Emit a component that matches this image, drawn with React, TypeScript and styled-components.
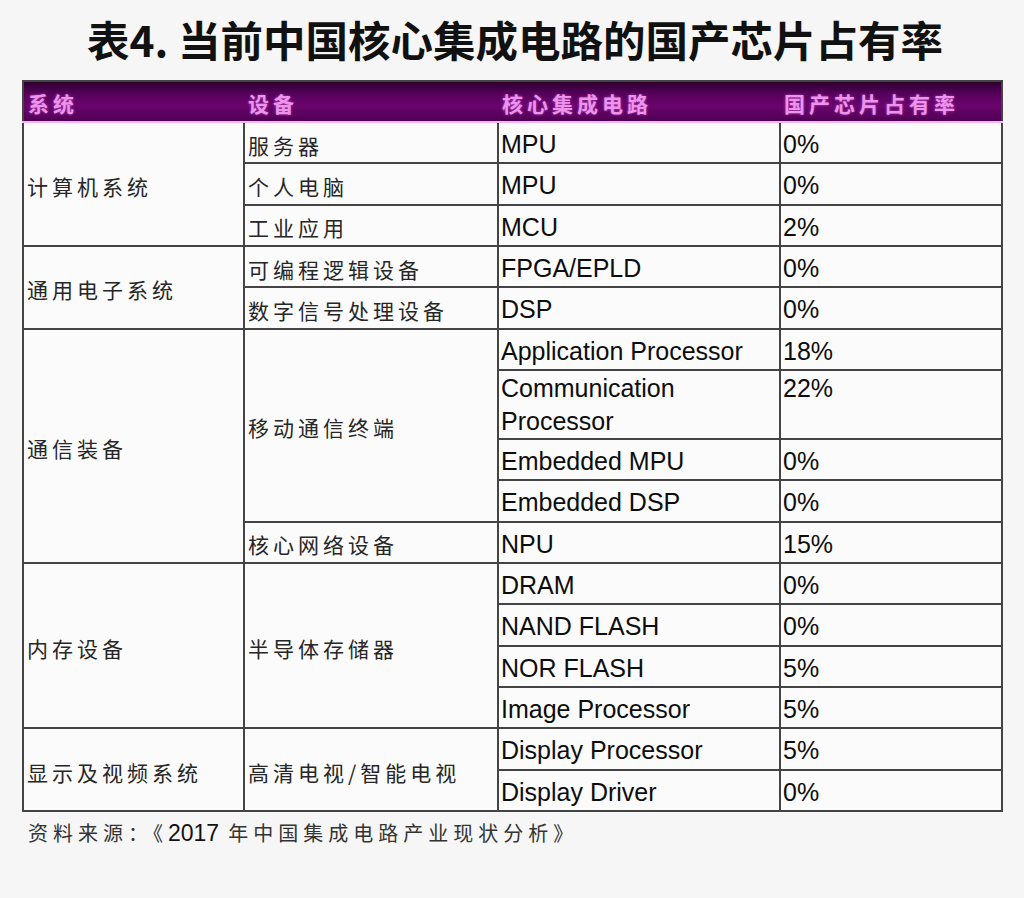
import styled, { createGlobalStyle } from "styled-components";

const GlobalStyle = createGlobalStyle`
  body {
    margin: 0;
    background: #f6f6f6;
  }
`;

const Page = styled.div`
  width: 1024px;
  height: 898px;
  box-sizing: border-box;
  padding-top: 12px;
  background: #f6f6f6;
  font-family: "Liberation Sans", Arial, sans-serif;
  overflow: hidden;
`;

const Title = styled.h1`
  margin: 0;
  padding-left: 6px;
  text-align: center;
  font-family: "Noto Sans CJK SC", "Liberation Sans", sans-serif;
  font-size: 42.5px;
  line-height: 54px;
  font-weight: 700;
  color: #111;
`;

const Table = styled.table`
  margin: 14px 0 0 22px;
  width: 979px;
  border-collapse: collapse;
  table-layout: fixed;
  border: 2px solid #444;
  background: #fbfbfb;
`;

const HeadRow = styled.tr`
  background: linear-gradient(
    180deg,
    #2a002c 0%,
    #55005a 30%,
    #6a046e 60%,
    #4e0052 100%
  );
`;

const HeadCell = styled.th`
  height: 37px;
  padding: 2px 4px 0;
  text-align: left;
  vertical-align: middle;
  font-family: "Noto Sans CJK SC", sans-serif;
  font-size: 21px;
  font-weight: 700;
  letter-spacing: 4px;
  color: #ee92ee;
  text-shadow: 0 0 3px rgba(255, 160, 255, 0.45);
  border-bottom: 2px solid #f2b4f2;
`;

const Cell = styled.td<{ $zh?: boolean; $tall?: boolean }>`
  height: ${(p) => (p.$tall ? 66 : 35.33)}px;
  box-sizing: content-box;
  padding: ${(p) => (p.$tall ? "1px 2px 0" : "4px 2px 0")};
  border: 2px solid #444;
  vertical-align: ${(p) => (p.$tall ? "top" : "middle")};
  text-align: left;
  color: ${(p) => (p.$zh ? "#262626" : "#0d0d0d")};
  font-family: ${(p) =>
    p.$zh
      ? '"Noto Sans CJK SC", sans-serif'
      : '"Liberation Sans", Arial, sans-serif'};
  font-size: ${(p) => (p.$zh ? 21 : 25)}px;
  letter-spacing: ${(p) => (p.$zh ? 4 : 0)}px;
  line-height: ${(p) => (p.$tall ? "33px" : "normal")};
  padding-left: ${(p) => (p.$zh ? 3 : 2)}px;
`;

const Note = styled.p`
  margin: 8px 0 0 28px;
  font-family: "Noto Sans CJK SC", sans-serif;
  font-size: 20px;
  line-height: 26px;
  letter-spacing: 5px;
  color: #333;
`;

const NoteYear = styled.span`
  font-family: "Liberation Sans", Arial, sans-serif;
  font-size: 23px;
  letter-spacing: 0;
  color: #111;
  margin-right: 9px;
`;

type Device = { name: string; chips: [string, string][] };
type Group = { system: string; devices: Device[] };

const groups: Group[] = [
  {
    system: "计算机系统",
    devices: [
      { name: "服务器", chips: [["MPU", "0%"]] },
      { name: "个人电脑", chips: [["MPU", "0%"]] },
      { name: "工业应用", chips: [["MCU", "2%"]] },
    ],
  },
  {
    system: "通用电子系统",
    devices: [
      { name: "可编程逻辑设备", chips: [["FPGA/EPLD", "0%"]] },
      { name: "数字信号处理设备", chips: [["DSP", "0%"]] },
    ],
  },
  {
    system: "通信装备",
    devices: [
      {
        name: "移动通信终端",
        chips: [
          ["Application Processor", "18%"],
          ["Communication Processor", "22%"],
          ["Embedded MPU", "0%"],
          ["Embedded DSP", "0%"],
        ],
      },
      { name: "核心网络设备", chips: [["NPU", "15%"]] },
    ],
  },
  {
    system: "内存设备",
    devices: [
      {
        name: "半导体存储器",
        chips: [
          ["DRAM", "0%"],
          ["NAND FLASH", "0%"],
          ["NOR FLASH", "5%"],
          ["Image Processor", "5%"],
        ],
      },
    ],
  },
  {
    system: "显示及视频系统",
    devices: [
      {
        name: "高清电视/智能电视",
        chips: [
          ["Display Processor", "5%"],
          ["Display Driver", "0%"],
        ],
      },
    ],
  },
];

const App = () => {
  const rows: JSX.Element[] = [];

  groups.forEach((group, gi) => {
    const groupSpan = group.devices.reduce((n, d) => n + d.chips.length, 0);
    group.devices.forEach((device, di) => {
      device.chips.forEach(([chip, share], ci) => {
        // two-line chip name gets a taller row
        const tall = chip.length > 21;
        rows.push(
          <tr key={`${gi}-${di}-${ci}`}>
            {di === 0 && ci === 0 && (
              <Cell $zh rowSpan={groupSpan}>
                {group.system}
              </Cell>
            )}
            {ci === 0 && (
              <Cell $zh rowSpan={device.chips.length}>
                {device.name}
              </Cell>
            )}
            <Cell $tall={tall}>{chip}</Cell>
            <Cell $tall={tall}>{share}</Cell>
          </tr>
        );
      });
    });
  });

  return (
    <Page>
      <GlobalStyle />
      <Title>表4. 当前中国核心集成电路的国产芯片占有率</Title>
      <Table>
        <colgroup>
          <col style={{ width: 221 }} />
          <col style={{ width: 254 }} />
          <col style={{ width: 282 }} />
          <col style={{ width: 222 }} />
        </colgroup>
        <thead>
          <HeadRow>
            <HeadCell>系统</HeadCell>
            <HeadCell>设备</HeadCell>
            <HeadCell>核心集成电路</HeadCell>
            <HeadCell>国产芯片占有率</HeadCell>
          </HeadRow>
        </thead>
        <tbody>{rows}</tbody>
      </Table>
      <Note>
        资料来源：《<NoteYear>2017</NoteYear>年中国集成电路产业现状分析》
      </Note>
    </Page>
  );
};

export default App;
